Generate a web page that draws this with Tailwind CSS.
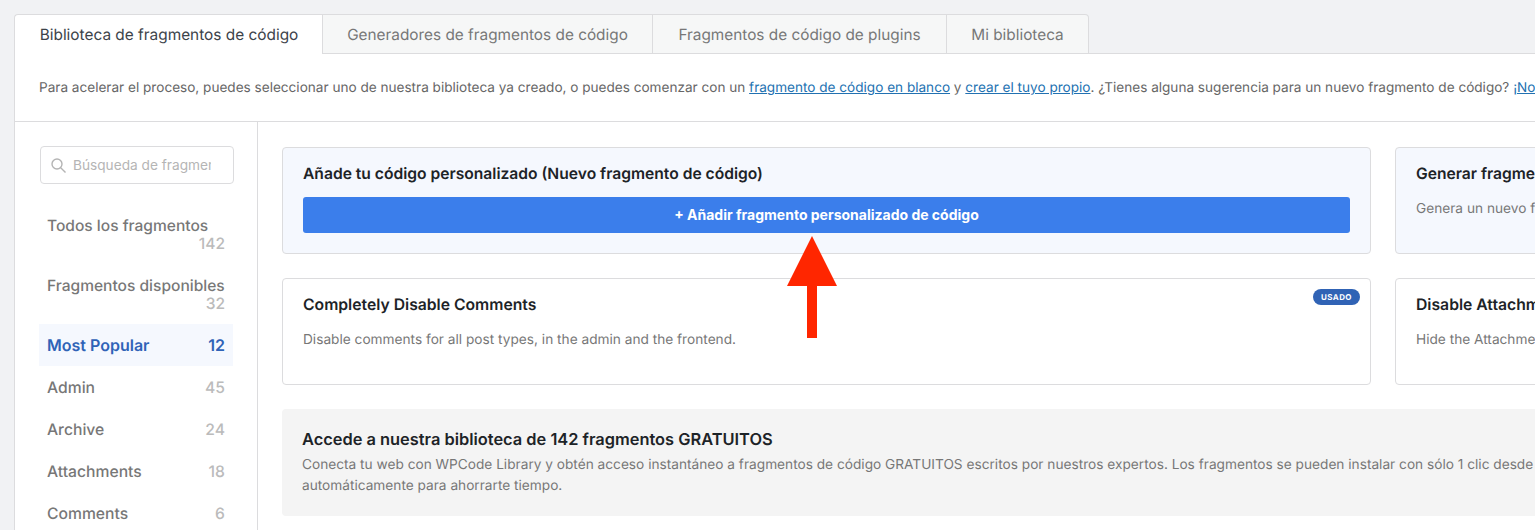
<!DOCTYPE html>
<html lang="es">
<head>
<meta charset="utf-8">
<title>Biblioteca de fragmentos</title>
<script src="https://cdn.jsdelivr.net/npm/@tailwindcss/browser@4"></script>
</head>
<body class="relative h-[530px] w-[1535px] overflow-hidden bg-[#f1f2f4] font-['Inter',sans-serif] text-[#3c434a] [text-rendering:geometricPrecision]">
<div class="pl-[14px] pt-[14px]">
  <div class="flex h-[40px] items-stretch">
    <div class="flex w-[309px] items-start justify-center rounded-tl-[4px] border-l border-t border-[#dcdcde] bg-white pt-[10px] text-[15.4px] leading-[20px] text-[#3c434a]">Biblioteca de fragmentos de código</div>
    <div class="-ml-[1px] flex w-[331px] items-start justify-center border border-[#dcdcde] bg-[#f6f7f7] pt-[10px] text-[15.35px] leading-[20px] text-[#777]">Generadores de fragmentos de código</div>
    <div class="flex w-[294px] items-start justify-center border border-l-0 border-[#dcdcde] bg-[#f6f7f7] pt-[10px] text-[15.35px] leading-[20px] text-[#777]">Fragmentos de código de plugins</div>
    <div class="flex w-[142px] items-start justify-center rounded-tr-[4px] border border-l-0 border-[#dcdcde] bg-[#f6f7f7] pt-[10px] text-[15.35px] leading-[20px] text-[#777]">Mi biblioteca</div>
    <div class="flex-1 border-b border-[#dcdcde]"></div>
  </div>
  <div class="border-l border-[#dcdcde] bg-white">
    <div class="flex h-[68px] items-start overflow-hidden whitespace-nowrap border-b border-[#dcdcde] pl-[24px] pt-[24px] text-[13.58px] leading-[20px] text-[#666]">
      <p>Para acelerar el proceso, puedes seleccionar uno de nuestra biblioteca ya creado, o puedes comenzar con un <a class="text-[#2271b1] underline">fragmento de código en blanco</a> y <a class="text-[#2271b1] underline">crear el tuyo propio</a>. ¿Tienes alguna sugerencia para un nuevo fragmento de código? <a class="text-[#2271b1] underline">¡No dudes en decírnoslo!</a></p>
    </div>
    <div class="flex h-[410px]">
      <aside class="w-[243px] shrink-0 border-r border-[#dcdcde] pl-[25px] pr-[23px] pt-[24px]">
        <label class="flex h-[38px] w-[194px] items-center gap-[6px] rounded-[4px] border border-[#dcdcde] bg-white pl-[9px]">
          <svg class="size-[17px] shrink-0 text-[#b4b4b4]" viewBox="0 0 17 17" fill="none" stroke="currentColor" stroke-width="1.4"><circle cx="7" cy="7" r="5"/><path d="M10.7 10.7 15.5 15.5"/></svg>
          <input class="w-[138px] bg-transparent text-[13.68px] leading-[20px] outline-none placeholder:text-[#b5b5b5]" placeholder="Búsqueda de fragmentos">
        </label>
        <div class="-ml-[1px] mt-[20px] flex w-[194px] flex-col text-[15.7px] leading-[18px] text-[#777]">
          <div class="flex h-[60px] flex-wrap content-start justify-between px-[8px] pt-[13px] text-[15.55px]"><span class="font-medium">Todos los fragmentos</span><span class="ml-auto font-medium text-[#bbb]">142</span></div>
          <div class="flex h-[60px] flex-wrap content-start justify-between px-[8px] pt-[13px] text-[15.55px]"><span class="whitespace-nowrap font-medium">Fragmentos disponibles</span><span class="ml-auto font-medium text-[#bbb]">32</span></div>
          <div class="flex h-[42px] items-center justify-between bg-[#f5f8fe] px-[8px] text-[16px] font-semibold text-[#2f63b7]"><span>Most Popular</span><span>12</span></div>
          <div class="flex h-[42px] items-center justify-between px-[8px] pt-[1px] font-medium"><span>Admin</span><span class="text-[#bbb]">45</span></div>
          <div class="flex h-[42px] items-center justify-between px-[8px] pt-[1px] font-medium"><span>Archive</span><span class="text-[#bbb]">24</span></div>
          <div class="flex h-[42px] items-center justify-between px-[8px] pt-[1px] font-medium"><span>Attachments</span><span class="text-[#bbb]">18</span></div>
          <div class="flex h-[42px] items-center justify-between px-[8px] pt-[1px] font-medium"><span>Comments</span><span class="text-[#bbb]">6</span></div>
        </div>
      </aside>
      <main class="min-w-0 flex-1 overflow-hidden pl-[24px] pt-[25px]">
        <div class="flex w-[1400px] gap-[24px]">
          <section class="h-[107px] w-[1089px] shrink-0 rounded-[4px] border border-[#dcdcde] bg-[#f5f8fe] px-[20px] pt-[16px]">
            <h3 class="text-[15.63px] font-semibold leading-[20px] text-[#1d2327]">Añade tu código personalizado (Nuevo fragmento de código)</h3>
            <button class="mt-[13px] flex h-[36px] w-full items-center justify-center rounded-[3px] bg-[#3b7eeb] pb-[1px] text-[14px] font-bold text-white">+ Añadir fragmento personalizado de código</button>
          </section>
          <section class="h-[107px] w-[300px] shrink-0 rounded-[4px] border border-[#dcdcde] bg-[#f5f8fe] px-[20px] pt-[16px]">
            <h3 class="text-[15.63px] font-semibold leading-[20px] text-[#1d2327]">Generar fragmento</h3>
            <p class="mt-[15px] text-[13.68px] leading-[20px] text-[#777]">Genera un nuevo fragmento</p>
          </section>
        </div>
        <div class="mt-[24px] flex w-[1400px] gap-[24px]">
          <section class="relative h-[107px] w-[1089px] shrink-0 rounded-[4px] border border-[#dcdcde] bg-white px-[20px] pt-[16px]">
            <h3 class="text-[15.73px] font-semibold leading-[20px] text-[#1d2327]">Completely Disable Comments</h3>
            <p class="mt-[15px] text-[13.68px] leading-[20px] text-[#777]">Disable comments for all post types, in the admin and the frontend.</p>
            <span class="absolute right-[10px] top-[10px] flex h-[16px] w-[47px] items-center justify-center rounded-full bg-[#3063b5] text-[8px] font-bold tracking-[0.4px] text-white">USADO</span>
          </section>
          <section class="h-[107px] w-[300px] shrink-0 rounded-[4px] border border-[#dcdcde] bg-white px-[20px] pt-[16px]">
            <h3 class="text-[15.73px] font-semibold leading-[20px] text-[#1d2327]">Disable Attachments</h3>
            <p class="mt-[15px] text-[13.68px] leading-[20px] text-[#777]">Hide the Attachments</p>
          </section>
        </div>
        <div class="mt-[24px] h-[107px] w-[1400px] rounded-[4px] bg-[#f4f4f4] pl-[20px] pt-[20px]">
          <h3 class="text-[16.4px] font-semibold leading-[20px] text-[#1d2327]">Accede a nuestra biblioteca de 142 fragmentos GRATUITOS</h3>
          <p class="mt-[6px] whitespace-nowrap text-[13.68px] leading-[21px] text-[#777]">Conecta tu web con WPCode Library y obtén acceso instantáneo a fragmentos de código GRATUITOS escritos por nuestros expertos. Los fragmentos se pueden instalar con sólo 1 clic desde el plugin</p>
          <p class="whitespace-nowrap text-[13.68px] leading-[21px] text-[#777]">automáticamente para ahorrarte tiempo.</p>
        </div>
      </main>
    </div>
  </div>
</div>
<svg class="absolute left-[787px] top-[236px]" width="50" height="102" viewBox="0 0 50 102" fill="#ff2600"><path d="M25 0 50 50H30V102H20V50H0Z"/></svg>
</body>
</html>
